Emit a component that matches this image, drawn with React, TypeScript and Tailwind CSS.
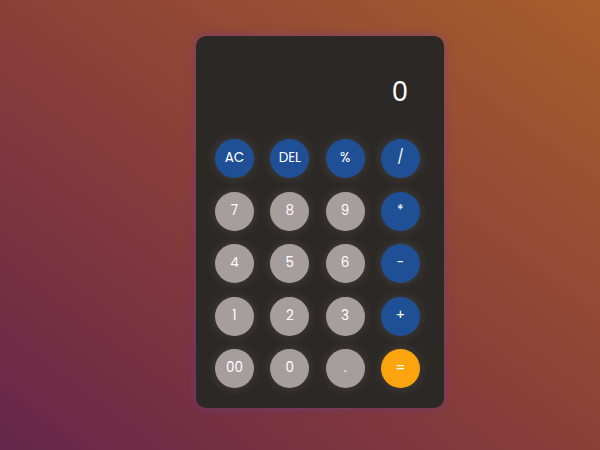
const keys: { label: string; kind: "op" | "num" | "eq" }[] = [
  { label: "AC", kind: "op" },
  { label: "DEL", kind: "op" },
  { label: "%", kind: "op" },
  { label: "/", kind: "op" },
  { label: "7", kind: "num" },
  { label: "8", kind: "num" },
  { label: "9", kind: "num" },
  { label: "*", kind: "op" },
  { label: "4", kind: "num" },
  { label: "5", kind: "num" },
  { label: "6", kind: "num" },
  { label: "-", kind: "op" },
  { label: "1", kind: "num" },
  { label: "2", kind: "num" },
  { label: "3", kind: "num" },
  { label: "+", kind: "op" },
  { label: "00", kind: "num" },
  { label: "0", kind: "num" },
  { label: ".", kind: "num" },
  { label: "=", kind: "eq" },
];

const kindClass = {
  op: "bg-[#1f4f94]",
  num: "bg-[#a69d9d]",
  eq: "bg-[#fba40e]",
};

export default function App() {
  return (
    <div className="w-[600px] h-[450px] bg-[linear-gradient(to_top_right,#66264a,#8a4038_50%,#a85e2c)] flex pl-[196px] pt-[36px] font-['Poppins','Lato',sans-serif]">
      <div className="w-[248px] h-[372px] rounded-[10px] bg-[#2c2826] shadow-[0_0_8px_rgba(110,60,140,0.7)] flex flex-col pl-[19px] pr-[24px]">
        <div className="h-[103px] flex items-center justify-end pr-[12px] pt-[8px]">
          <span className="text-white text-[26px] leading-none">0</span>
        </div>
        <div className="grid grid-cols-[repeat(4,39px)] gap-x-[16.3px] gap-y-[13.5px]">
          {keys.map((k, i) => (
            <button
              key={i}
              className={`w-[39px] h-[39px] rounded-full text-white text-[13.5px] flex items-center justify-center shadow-[0_0_12px_rgba(255,255,255,0.12)] ${kindClass[k.kind]}`}
            >
              {k.label}
            </button>
          ))}
        </div>
      </div>
    </div>
  );
}
